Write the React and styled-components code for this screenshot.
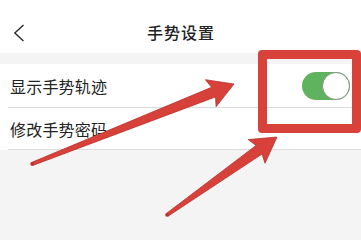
import React from 'react';
import styled, { createGlobalStyle } from 'styled-components';

const GlobalStyle = createGlobalStyle`
  html, body {
    margin: 0;
    padding: 0;
    background: #f4f4f4;
    overflow: hidden;
  }
  body {
    font-family: "Noto Sans CJK SC", "Noto Sans", sans-serif;
    color: #222;
  }
`;

const Screen = styled.div`
  position: relative;
  width: 361px;
  height: 236px;
  overflow: hidden;
  background: #f4f4f4;
`;

const Header = styled.div`
  height: 53px;
  box-sizing: border-box;
  padding-top: 10px;
  background: #fff;
  display: grid;
  grid-template-columns: 1fr auto 1fr;
  align-items: center;
`;

const Back = styled.button`
  justify-self: start;
  border: 0;
  background: none;
  padding: 2px 0 0 13px;
  height: 100%;
  display: flex;
  align-items: center;
  cursor: pointer;
`;

const Title = styled.h1`
  margin: 0;
  padding-left: 1px;
  font-size: 16px;
  line-height: 20px;
  font-weight: 500;
  color: #222;
  letter-spacing: 1px;
`;

const List = styled.div`
  margin-top: 11px;
  background: #fff;
  padding-left: 8px;
`;

const Row = styled.div`
  height: ${(p) => p.$h}px;
  display: flex;
  align-items: center;
  justify-content: space-between;
  padding: 0 11px 0 2px;
  border-bottom: 1px solid #dcdcdc;
  font-size: 16px;
  letter-spacing: 0.2px;
`;

const Toggle = styled.div`
  width: 48px;
  height: 28px;
  border-radius: 14px;
  background: ${(p) => (p.$on ? '#5fb35f' : '#e5e5e5')};
  display: flex;
  justify-content: ${(p) => (p.$on ? 'flex-end' : 'flex-start')};
`;

const Knob = styled.div`
  width: 28px;
  height: 28px;
  box-sizing: border-box;
  border-radius: 50%;
  background: #fff;
  border: 1px solid #8a8f8a;
`;

const Highlight = styled.div`
  position: absolute;
  left: 258px;
  top: 50px;
  width: 103px;
  height: 83px;
  box-sizing: border-box;
  border: 9px solid #d9413b;
  border-radius: 4px;
`;

const Marks = styled.svg`
  position: absolute;
  left: 0;
  top: 0;
  pointer-events: none;
`;

function arrowPoints(tail, tip, headLen, headHalf, shaftHalf, tailHalf) {
  const dx = tip[0] - tail[0];
  const dy = tip[1] - tail[1];
  const len = Math.hypot(dx, dy);
  const ux = dx / len;
  const uy = dy / len;
  const nx = -uy;
  const ny = ux;
  const bx = tip[0] - ux * headLen;
  const by = tip[1] - uy * headLen;
  const pt = (x, y) => `${x.toFixed(1)},${y.toFixed(1)}`;
  return [
    pt(tail[0] + nx * tailHalf, tail[1] + ny * tailHalf),
    pt(bx + ux * 3 + nx * shaftHalf, by + uy * 3 + ny * shaftHalf),
    pt(bx + nx * headHalf, by + ny * headHalf),
    pt(tip[0], tip[1]),
    pt(bx - nx * headHalf, by - ny * headHalf),
    pt(bx + ux * 3 - nx * shaftHalf, by + uy * 3 - ny * shaftHalf),
    pt(tail[0] - nx * tailHalf, tail[1] - ny * tailHalf),
  ].join(' ');
}

const arrows = [
  { tail: [32, 164], tip: [234, 84] },
  { tail: [167, 215], tip: [277, 137] },
];

export default function App() {
  return (
    <Screen>
      <GlobalStyle />
      <Header>
        <Back aria-label="返回">
          <svg width="12" height="18" viewBox="0 0 12 18">
            <path d="M10.5 1 L1.8 9 L10.5 17" fill="none" stroke="#222" strokeWidth="1.3" strokeLinejoin="miter" />
          </svg>
        </Back>
        <Title>手势设置</Title>
        <span />
      </Header>
      <List>
        <Row $h={43}>
          <span>显示手势轨迹</span>
          <Toggle $on>
            <Knob />
          </Toggle>
        </Row>
        <Row $h={41}>
          <span>修改手势密码</span>
        </Row>
      </List>
      <Highlight />
      <Marks width="361" height="236" viewBox="0 0 361 236">
        {arrows.map((a, i) => (
          <g key={i}>
            <polygon
              points={arrowPoints(a.tail, a.tip, 25, 14.5, 5.2, 1.6)}
              fill="#d8403a"
              stroke="#b8322e"
              strokeWidth="0.8"
              strokeLinejoin="round"
            />
            <circle cx={a.tail[0]} cy={a.tail[1]} r="1.8" fill="#b8322e" />
          </g>
        ))}
      </Marks>
    </Screen>
  );
}
